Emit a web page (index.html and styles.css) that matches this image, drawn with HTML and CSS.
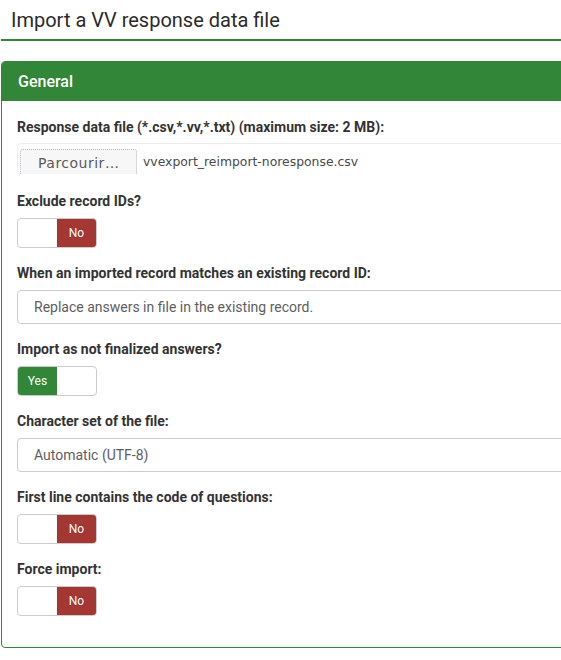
FILE: index.html
```html
<!DOCTYPE html>
<html lang="en">
<head>
<meta charset="utf-8">
<title>Import a VV response data file</title>
<link rel="stylesheet" href="styles.css">
</head>
<body>
<div class="page">
  <h1 class="page-title">Import a VV response data file</h1>
  <div class="panel">
    <div class="panel-heading">General</div>
    <div class="panel-body">
      <div class="form-group">
        <label class="form-label">Response data file (*.csv,*.vv,*.txt) (maximum size: 2 MB):</label>
        <div class="file-box">
          <span class="file-button">Parcourir…</span>
          <span class="file-name">vvexport_reimport-noresponse.csv</span>
        </div>
      </div>
      <div class="form-group">
        <label class="form-label">Exclude record IDs?</label>
        <div class="switch">
          <span class="switch-half"></span>
          <span class="switch-half switch-no">No</span>
        </div>
      </div>
      <div class="form-group">
        <label class="form-label">When an imported record matches an existing record ID:</label>
        <div class="select">Replace answers in file in the existing record.</div>
      </div>
      <div class="form-group">
        <label class="form-label">Import as not finalized answers?</label>
        <div class="switch">
          <span class="switch-half switch-yes">Yes</span>
          <span class="switch-half"></span>
        </div>
      </div>
      <div class="form-group">
        <label class="form-label">Character set of the file:</label>
        <div class="select">Automatic (UTF-8)</div>
      </div>
      <div class="form-group">
        <label class="form-label">First line contains the code of questions:</label>
        <div class="switch">
          <span class="switch-half"></span>
          <span class="switch-half switch-no">No</span>
        </div>
      </div>
      <div class="form-group">
        <label class="form-label">Force import:</label>
        <div class="switch">
          <span class="switch-half"></span>
          <span class="switch-half switch-no">No</span>
        </div>
      </div>
    </div>
  </div>
</div>
</body>
</html>
```

FILE: styles.css
```css
html, body {
  margin: 0;
  padding: 0;
  overflow: hidden;
  background: #ffffff;
}

body {
  font-family: Roboto, "Liberation Sans", sans-serif;
  color: #333333;
}

.page {
  width: 600px;
  padding-left: 1px;
}

.page-title {
  margin: 0;
  padding: 6px 10px 5px;
  font-size: 20px;
  line-height: 28px;
  font-weight: 400;
  color: #2b2b2b;
  border-bottom: 2px solid #328637;
}

.panel {
  margin-top: 20px;
  border: 1px solid #328637;
  border-radius: 4px;
}

.panel-heading {
  background: #328637;
  color: #ffffff;
  font-size: 16px;
  line-height: 39px;
  height: 39px;
  padding-left: 16px;
  font-weight: 500;
  border-radius: 3px 3px 0 0;
}

.panel-body {
  padding: 16px 15px 16px;
}

.form-group {
  margin-bottom: 15px;
}

.form-label {
  display: block;
  font-size: 14px;
  line-height: 20px;
  font-weight: 700;
  color: #333333;
  margin-bottom: 7px;
}

.file-box {
  height: 31px;
  overflow: hidden;
  border-top: 1px solid #ececec;
  border-left: 1px solid #f2f2f2;
  border-radius: 4px 0 0 0;
  display: flex;
  align-items: flex-start;
  padding-top: 5px;
  box-sizing: border-box;
  margin-top: -1px;
  margin-bottom: 17px;
}

.file-button {
  margin-left: 2px;
  width: 117px;
  height: 32px;
  box-sizing: border-box;
  padding-left: 17px;
  padding-top: 5px;
  background: #f7f7f7;
  border: 1px dotted #b8b8c0;
  border-radius: 3px;
  font-family: "DejaVu Sans", sans-serif;
  font-size: 14px;
  letter-spacing: 0.5px;
  color: #5a5a5a;
  white-space: nowrap;
}

.file-name {
  margin-left: 6px;
  padding-top: 5px;
  font-family: "DejaVu Sans", sans-serif;
  font-size: 12.4px;
  color: #4a4a4a;
  white-space: nowrap;
}

.select {
  height: 34px;
  box-sizing: border-box;
  border: 1px solid #cccccc;
  border-radius: 4px;
  padding-left: 16px;
  font-size: 14px;
  line-height: 32px;
  color: #5e5e5e;
}

.switch {
  display: flex;
  width: 80px;
  height: 30px;
  box-sizing: border-box;
  border: 1px solid #cccccc;
  border-radius: 4px;
  overflow: hidden;
}

.switch-half {
  flex: 1;
  display: flex;
  align-items: center;
  justify-content: center;
  font-size: 12px;
  color: #ffffff;
}

.switch-no {
  background: #a43732;
}

.switch-yes {
  background: #328637;
}
```
